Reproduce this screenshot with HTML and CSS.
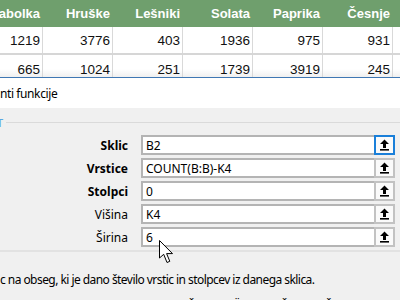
FILE: index.html
```html
<!DOCTYPE html>
<html lang="sl">
<head>
  <meta charset="UTF-8">
  <title>Argumenti funkcije</title>
  <link rel="stylesheet" href="styles.css">
</head>
<body>
  <div class="sheet">
    <div class="row head">
      <div class="cell">Jabolka</div>
      <div class="cell">Hruške</div>
      <div class="cell">Lešniki</div>
      <div class="cell">Solata</div>
      <div class="cell">Paprika</div>
      <div class="cell">Česnje</div>
      <div class="cell"></div>
    </div>
    <div class="row">
      <div class="cell">1219</div>
      <div class="cell">3776</div>
      <div class="cell">403</div>
      <div class="cell">1936</div>
      <div class="cell">975</div>
      <div class="cell">931</div>
      <div class="cell"></div>
    </div>
    <div class="row last">
      <div class="cell">665</div>
      <div class="cell">1024</div>
      <div class="cell">251</div>
      <div class="cell">1739</div>
      <div class="cell">3919</div>
      <div class="cell">245</div>
      <div class="cell"></div>
    </div>
  </div>

  <div class="dialog">
    <div class="dialog-title">nti funkcije</div>
    <div class="dialog-body">
      <div class="group-head">
        <span class="group-label">T</span>
        <span class="group-line"></span>
      </div>
      <div class="args">
        <label class="arg-label strong">Sklic</label>
        <div class="field">
          <span class="field-value">B2</span>
          <button class="ref-btn focus"><svg width="11" height="12" viewBox="0 0 11 12"><path d="M5.5 0.5 L10 5 L7 5 L7 9 L4 9 L4 5 L1 5 Z" fill="#000"/><rect x="1" y="10" width="9" height="1.6" fill="#000"/></svg></button>
        </div>
        <label class="arg-label strong">Vrstice</label>
        <div class="field">
          <span class="field-value">COUNT(B:B)-K4</span>
          <button class="ref-btn"><svg width="11" height="12" viewBox="0 0 11 12"><path d="M5.5 0.5 L10 5 L7 5 L7 9 L4 9 L4 5 L1 5 Z" fill="#000"/><rect x="1" y="10" width="9" height="1.6" fill="#000"/></svg></button>
        </div>
        <label class="arg-label strong">Stolpci</label>
        <div class="field">
          <span class="field-value">0</span>
          <button class="ref-btn"><svg width="11" height="12" viewBox="0 0 11 12"><path d="M5.5 0.5 L10 5 L7 5 L7 9 L4 9 L4 5 L1 5 Z" fill="#000"/><rect x="1" y="10" width="9" height="1.6" fill="#000"/></svg></button>
        </div>
        <label class="arg-label">Višina</label>
        <div class="field">
          <span class="field-value">K4</span>
          <button class="ref-btn"><svg width="11" height="12" viewBox="0 0 11 12"><path d="M5.5 0.5 L10 5 L7 5 L7 9 L4 9 L4 5 L1 5 Z" fill="#000"/><rect x="1" y="10" width="9" height="1.6" fill="#000"/></svg></button>
        </div>
        <label class="arg-label">Širina</label>
        <div class="field">
          <span class="field-value">6</span>
          <button class="ref-btn"><svg width="11" height="12" viewBox="0 0 11 12"><path d="M5.5 0.5 L10 5 L7 5 L7 9 L4 9 L4 5 L1 5 Z" fill="#000"/><rect x="1" y="10" width="9" height="1.6" fill="#000"/></svg></button>
        </div>
      </div>
      <div class="group-foot"></div>
      <p class="desc">c na obseg, ki je dano število vrstic in stolpcev iz danega sklica.</p>
      <p class="desc next">Č Ö Č Ť</p>
    </div>
  </div>

  <svg class="cursor" width="15" height="24" viewBox="0 0 15 24">
    <path d="M0.5 0.5 L0.5 18 L4.7 14.3 L8 22.5 L10.8 21.3 L7.6 13.6 L13.5 13.6 Z" fill="#fff" stroke="#000" stroke-width="1" stroke-linejoin="miter"/>
  </svg>
</body>
</html>
```

FILE: styles.css
```css
body {
  margin: 0;
  width: 400px;
  height: 300px;
  overflow: hidden;
  background: #f0f0f0;
  font-family: "Noto Sans", "Liberation Sans", sans-serif;
  position: relative;
}

/* spreadsheet behind the dialog */
.sheet {
  height: 77px;
  overflow: hidden;
  background: #fff;
  border-bottom: 1px solid #3f77b3;
  font-family: "Liberation Sans", Arial, sans-serif;
  font-size: 13.5px;
  color: #111;
}
.row {
  display: grid;
  grid-template-columns: repeat(7, 70px);
  margin-left: -27px;
  height: 28px;
  border-bottom: 2px solid #d6d6d6;
  box-sizing: border-box;
}
.row.head {
  height: 27px;
  background: #6f9f6d;
  color: #fff;
  font-weight: bold;
  font-size: 13px;
  border-bottom: none;
}
.row.last {
  background: linear-gradient(to bottom, #fff 50%, #e4e4e4 100%);
  border-bottom: none;
}
.cell {
  display: flex;
  align-items: center;
  justify-content: flex-end;
  padding-right: 2px;
  border-right: 1px solid #d9d9d9;
}
.head .cell { border-right: none; padding-right: 3px; }

/* dialog */
.dialog-title {
  background: #fff;
  height: 30px;
  display: flex;
  align-items: center;
  font-size: 12px;
  letter-spacing: -0.4px;
  color: #000;
}
.dialog-body {
  background: #f0f0f0;
}
.group-head {
  display: flex;
  align-items: center;
  height: 14px;
  padding-top: 7px;
}
.group-label {
  font-size: 11px;
  color: #5aa8e2;
  margin-left: -3px;
  width: 9px;
}
.group-line {
  flex: 1;
  border-top: 1px solid #dadada;
}
.args {
  display: grid;
  grid-template-columns: 128px 1fr;
  column-gap: 13px;
  row-gap: 3px;
  padding: 6px 5px 0 0;
  font-size: 12px;
}
.arg-label {
  text-align: right;
  align-self: center;
  color: #000;
}
.arg-label.strong { font-weight: bold; }
.field {
  display: flex;
  align-items: stretch;
  height: 20px;
  box-sizing: border-box;
  border: 2px solid #b4b4b4;
  background: #fff;
}
.field-value {
  flex: 1;
  display: flex;
  align-items: center;
  padding-left: 3px;
}
.ref-btn {
  width: 21px;
  margin: -2px -2px -2px 0;
  padding: 0;
  border: 2px solid #c2c2c2;
  background: #fafafa;
  display: flex;
  align-items: center;
  justify-content: center;
}
.ref-btn.focus { border-color: #1a7fd9; }
.group-foot {
  margin-top: 3px;
  border-top: 2px solid #e2e2e2;
}
.desc {
  margin: 19px 0 0;
  font-size: 12px;
  letter-spacing: -0.55px;
  color: #000;
}
.desc.next {
  margin-top: 9px;
  padding-left: 187px;
  word-spacing: 36px;
}

/* mouse pointer over the dialog */
.cursor {
  position: absolute;
  left: 159px;
  top: 240px;
}
```
